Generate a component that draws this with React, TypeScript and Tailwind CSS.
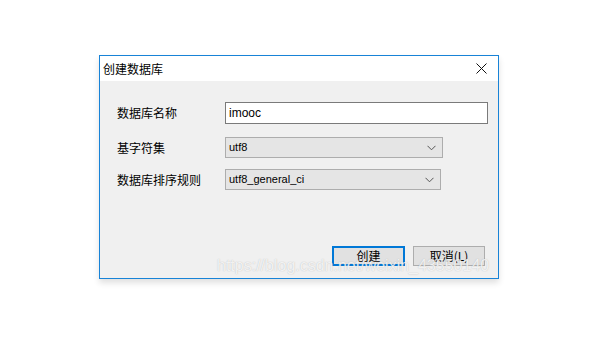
import React from "react";

const cjk = { fontFamily: '"Microsoft YaHei", "Noto Sans CJK SC", sans-serif' };
const lat = { fontFamily: '"Liberation Sans", Arial, sans-serif' };

function Chevron() {
  return (
    <svg width="9" height="6" viewBox="0 0 9 6" className="shrink-0">
      <path d="M0.5 0.8 L4.5 4.8 L8.5 0.8" fill="none" stroke="#555" strokeWidth="1" />
    </svg>
  );
}

export default function App() {
  return (
    <div className="w-[600px] h-[340px] bg-white overflow-hidden pt-[55px] pl-[99px]">
      <div className="relative w-[400px] h-[224px] border border-[#1883d7] bg-[#f0f0f0] flex flex-col shadow-[0_4px_6px_rgba(0,0,0,0.12)]">
        {/* title bar */}
        <div className="h-[25px] bg-white flex items-center justify-between pl-[3px] pr-[11px] shrink-0">
          <span className="text-[12px] text-black leading-none" style={cjk}>创建数据库</span>
          <svg width="11" height="11" viewBox="0 0 11 11">
            <path d="M0.5 0.5 L10.5 10.5 M10.5 0.5 L0.5 10.5" stroke="#111" strokeWidth="1" />
          </svg>
        </div>
        {/* body */}
        <div className="flex-1 flex flex-col pl-[17px] pt-[21px]">
          <div className="flex items-center h-[22px]">
            <span className="w-[108px] text-[12px] text-black" style={cjk}>数据库名称</span>
            <div className="w-[263px] h-[22px] bg-white border border-[#7a7a7a] flex items-center px-[3px]">
              <span className="text-[12px] text-black" style={lat}>imooc</span>
            </div>
          </div>
          <div className="flex items-center h-[21px] mt-[13px]">
            <span className="w-[108px] text-[12px] text-black" style={cjk}>基字符集</span>
            <div className="w-[218px] h-[21px] bg-[#e5e5e5] border border-[#adadad] flex items-center justify-between pl-[3px] pr-[6px]">
              <span className="text-[11px] text-black" style={lat}>utf8</span>
              <Chevron />
            </div>
          </div>
          <div className="flex items-center h-[21px] mt-[11px]">
            <span className="w-[108px] text-[12px] text-black" style={cjk}>数据库排序规则</span>
            <div className="w-[216px] h-[21px] bg-[#e5e5e5] border border-[#adadad] flex items-center justify-between pl-[3px] pr-[6px]">
              <span className="text-[11px] text-black" style={lat}>utf8_general_ci</span>
              <Chevron />
            </div>
          </div>
          <div className="flex justify-end gap-[8px] pr-[13px] mt-[56px]">
            <div className="w-[73px] h-[20px] border-2 border-[#0078d7] bg-[#e1e1e1] flex items-center justify-center">
              <span className="text-[12px] text-black leading-none" style={cjk}>创建</span>
            </div>
            <div className="w-[72px] h-[20px] border border-[#adadad] bg-[#e1e1e1] flex items-center justify-center">
              <span className="text-[12px] text-black leading-none" style={cjk}>取消(L)</span>
            </div>
          </div>
        </div>
        {/* watermark */}
        <div
          className="absolute left-[117px] top-[198px] text-[16px] text-white/80 whitespace-nowrap pointer-events-none [text-shadow:0_0_1px_rgba(120,120,120,0.5)]"
          style={lat}
        >
          https://blog.csdn.net/weixin_43550140
        </div>
      </div>
    </div>
  );
}
